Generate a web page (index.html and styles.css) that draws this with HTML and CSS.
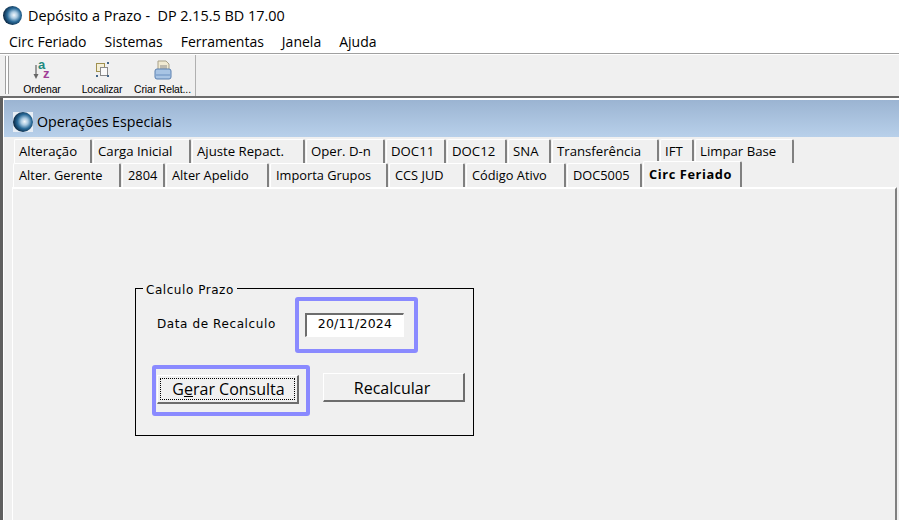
FILE: index.html
```
<!DOCTYPE html>
<html lang="pt">
<head>
<meta charset="utf-8">
<title>Depósito a Prazo</title>
<link rel="stylesheet" href="styles.css">
</head>
<body>
<svg class="defs" width="0" height="0"><defs>
<radialGradient id="orb" cx="58%" cy="48%" r="58%"><stop offset="0" stop-color="#f4f8fc"/><stop offset=".3" stop-color="#a8c8e0"/><stop offset=".62" stop-color="#2a6a98"/><stop offset="1" stop-color="#08233e"/></radialGradient>
</defs></svg>
<header class="titlebar">
  <svg class="logo" viewBox="0 0 20 20"><circle cx="10" cy="10" r="10" fill="url(#orb)"/></svg>
  <span>Depósito a Prazo -  DP 2.15.5 BD 17.00</span>
</header>
<nav class="menubar">
  <span>Circ Feriado</span><span>Sistemas</span><span>Ferramentas</span><span>Janela</span><span>Ajuda</span>
</nav>
<div class="toolbar">
  <div class="grip"></div>
  <div class="tool tool-a">
    <svg class="tool-icon" viewBox="0 0 24 22"><path d="M6 5v11" stroke="#777" stroke-width="1.4" fill="none"/><path d="M3.5 14l2.5 5 2.5-5z" fill="#666"/><text x="8" y="9" class="ic-a">a</text><text x="13" y="18" class="ic-z">z</text></svg>
    <span>Ordenar</span>
  </div>
  <div class="tool tool-b">
    <svg class="tool-icon" viewBox="0 0 24 22"><rect x="6.5" y="3.5" width="8" height="8" fill="#f4efd8" stroke="#a0904f"/><rect x="10.5" y="7.5" width="7" height="8" fill="#fafafa" stroke="#8a8a8a"/><rect x="17" y="2" width="2" height="2" fill="#446688"/><rect x="6" y="15" width="2" height="2" fill="#446688"/><rect x="17" y="15" width="2" height="2" fill="#446688"/></svg>
    <span>Localizar</span>
  </div>
  <div class="tool tool-c">
    <svg class="tool-icon" viewBox="0 0 24 22"><path d="M7 1h8l3 3v8H7z" fill="#f1ead2" stroke="#a8a088"/><path d="M9 6h7M9 8h7" stroke="#8a8a8a"/><rect x="4" y="9" width="16" height="10" rx="2" fill="#a8c4e4" stroke="#5a80b0"/><path d="M5 15h14" stroke="#6a90c0"/></svg>
    <span>Criar Relat...</span>
  </div>
</div>
<main class="mdi">
  <div class="window">
    <div class="caption">
      <span class="caption-logo"><svg class="logo-small" viewBox="0 0 20 20"><circle cx="10" cy="10" r="10" fill="url(#orb)"/></svg></span>
      <span>Operações Especiais</span>
    </div>
    <div class="tabs">
      <div class="tab-row row-one">
        <div class="tab">Alteração</div><div class="tab">Carga Inicial</div><div class="tab">Ajuste Repact.</div><div class="tab">Oper. D-n</div><div class="tab">DOC11</div><div class="tab">DOC12</div><div class="tab">SNA</div><div class="tab">Transferência</div><div class="tab">IFT</div><div class="tab">Limpar Base</div>
      </div>
      <div class="tab-row row-two">
        <div class="tab">Alter. Gerente</div><div class="tab">2804</div><div class="tab">Alter Apelido</div><div class="tab">Importa Grupos</div><div class="tab">CCS JUD</div><div class="tab">Código Ativo</div><div class="tab">DOC5005</div><div class="tab active">Circ Feriado</div>
      </div>
    </div>
    <div class="pane">
      <fieldset class="group">
        <legend>Calculo Prazo</legend>
        <div class="date-row">
          <label class="date-label" for="d">Data de Recalculo</label>
          <input id="d" class="date-input" value="20/11/2024">
        </div>
        <div class="button-row">
          <button class="btn btn-focus"><span class="focus-ring">G<u>e</u>rar Consulta</span></button>
          <button class="btn btn-raised">Recalcular</button>
        </div>
        <div class="mark mark-date"></div>
        <div class="mark mark-button"></div>
      </fieldset>
    </div>
  </div>
</main>
</body>
</html>
```
FILE: styles.css
```
* { box-sizing: border-box; }
html, body { margin: 0; height: 100%; }
body {
  width: 899px; height: 520px; overflow: hidden; background: #fff;
  font-family: "Open Sans", "Noto Sans", sans-serif; color: #000;
  display: flex; flex-direction: column; position: relative;
}
.defs { position: absolute; }
.titlebar { height: 30px; display: flex; align-items: center; padding-left: 3px; gap: 6px; font-size: 14.4px; white-space: pre; flex: none; }
.logo { width: 19px; height: 19px; }
.menubar { height: 23px; display: flex; align-items: center; padding-left: 9px; gap: 18px; font-size: 14px; flex: none; border-bottom: 1px solid #a0a0a0; box-sizing: content-box; }
.toolbar { height: 44px; background: #f0f0f0; border-top: 1px solid #fff; display: flex; flex: none; border-bottom: 2px solid #6d6d6d; }
.grip { width: 4px; margin: 1px 0 2px 5px; border-left: 1px solid #a0a0a0; border-right: 1px solid #a0a0a0; background: #fff; }
.tool { display: flex; flex-direction: column; align-items: center; font-family: "Liberation Sans", sans-serif; font-size: 10.4px; letter-spacing: -0.1px; padding-top: 5px; color: #000; width: 60px; }
.tool span { margin-top: 1px; line-height: 13px; white-space: nowrap; }
.tool-a { margin-left: 3px; }
.tool-c { width: 64px; border-right: 1px solid #b0b0b0; padding-right: 2px; }
.tool-icon { width: 24px; height: 22px; overflow: visible; }
.ic-a { font: bold 13px "Liberation Sans", sans-serif; fill: #1f8a80; }
.ic-z { font: bold 13px "Liberation Sans", sans-serif; fill: #a03c96; }
.mdi { flex: 1; background: #f0f0f0; border-left: 3px solid #5f5f5f; min-height: 0; }
.window { height: 100%; border-top: 2px solid #fff; border-left: 1px solid #fff; display: flex; flex-direction: column; padding-right: 2px; }
.caption { height: 37px; flex: none; background: linear-gradient(#9bb4d2, #b8d0ea); display: flex; align-items: center; gap: 4px; padding: 6px 0 0 9px; font-size: 14.2px; margin-right: -2px; }
.caption-logo { width: 20px; height: 20px; background: #e8eef5; display: flex; align-items: center; justify-content: center; }
.logo-small { width: 20px; height: 20px; }
.tabs { flex: none; background: #f0f0f0; font-family: "Open Sans", sans-serif; font-size: 13.2px; padding: 2px 0 0 9px; }
.tab-row { display: grid; height: 24px; }
.row-one { grid-template-columns: 79px 99px 114px 80px 61px 61px 44px 108px 35px 100px; padding-left: 1px; }
.row-two { grid-template-columns: 109px 44px 104px 119px 77px 101px 76px 100px; font-size: 12.8px; }
.tab { background: #f0f0f0; border-top: 1px solid #fff; border-left: 1px solid #fff; border-right: 2px solid #808080; padding: 3px 0 0 4px; white-space: nowrap; border-radius: 2px 2px 0 0; line-height: 17px; margin-right: 1px; }
.row-two .tab { padding-left: 5px; }
.tab.active { font-weight: 700; margin-top: -2px; height: 26px; position: relative; line-height: 18px; letter-spacing: .6px; }
.pane { flex: 1; background: #f0f0f0; border-top: 2px solid #fff; border-right: 2px solid #808080; margin-left: 8px; border-left: 1px solid #fff; position: relative; }
.group { position: absolute; left: 122px; top: 91px; width: 339px; height: 156px; margin: 0; padding: 0; border: 1px solid #000; border-radius: 0; min-width: 0; font-family: "DejaVu Sans", sans-serif; font-size: 12px; }
.group legend { margin-left: 7px; padding: 4px 3px 0; font-size: 12px; line-height: 13px; color: #000; letter-spacing: .55px; }
.date-row { display: flex; align-items: center; margin-top: 16px; padding-left: 21px; }
.date-label { width: 148px; letter-spacing: .6px; padding-bottom: 3px; }
.date-input { width: 99px; height: 24px; border-style: solid; border-color: #6d6d6d #fff #fff #6d6d6d; border-width: 2px 1px 1px 2px; background: #fff; font: 12.5px "DejaVu Sans", sans-serif; letter-spacing: .25px; text-align: center; padding: 0 0 5px; color: #000; }
.button-row { display: flex; align-items: flex-start; margin-top: 36px; padding-left: 21px; gap: 24px; }
.btn { width: 142px; height: 29px; background: #f0f0f0; font-family: "Open Sans", sans-serif; font-size: 16px; border-style: solid; border-color: #fff #6d6d6d #6d6d6d #fff; border-width: 1px 2px 2px 1px; padding: 0; color: #000; }
.btn-raised { padding: 1px 3px 0 0; }
.btn-focus { margin-top: 2px; padding: 2px; }
.focus-ring { display: flex; align-items: center; justify-content: center; width: 100%; height: 100%; padding-left: 2px; border: 1px dotted #000; white-space: pre; }
.mark { position: absolute; border: 4px solid #8a8aff; border-radius: 3px; }
.mark-date { left: 159px; top: 0; width: 123px; height: 56px; }
.mark-button { left: 16px; top: 68px; width: 158px; height: 51px; }
```
